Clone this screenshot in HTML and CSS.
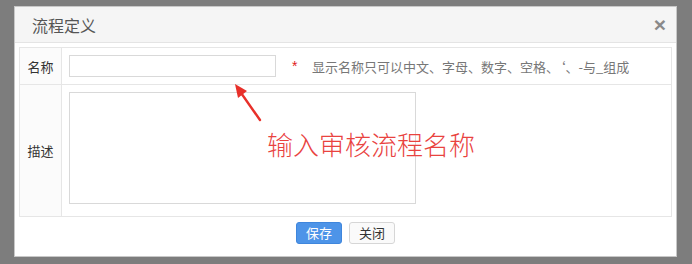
FILE: index.html
```html
<!DOCTYPE html>
<html lang="zh">
<head>
<meta charset="utf-8">
<link rel="stylesheet" href="styles.css">
</head>
<body>
<div class="dialog">
  <div class="dlg-head">
    <span class="dlg-title">流程定义</span>
    <span class="dlg-close">×</span>
  </div>
  <div class="dlg-body">
    <table class="form">
      <tr class="row-name">
        <td class="lbl">名称</td>
        <td class="val">
          <div class="name-line">
            <input class="txt" type="text">
            <span class="req">*</span>
            <span class="hint">显示名称只可以中文、字母、数字、空格、‘、-与_组成</span>
          </div>
        </td>
      </tr>
      <tr class="row-desc">
        <td class="lbl">描述</td>
        <td class="val">
          <div class="desc-line">
            <textarea class="area"></textarea>
            <span class="note">输入审核流程名称</span>
          </div>
        </td>
      </tr>
    </table>
  </div>
  <div class="dlg-foot">
    <button class="btn btn-primary">保存</button>
    <button class="btn">关闭</button>
  </div>
  <svg class="arrow" width="40" height="44" viewBox="0 0 40 44">
    <line x1="6" y1="7" x2="27" y2="37" stroke="#e8302a" stroke-width="2.4" stroke-linecap="round"/>
    <polygon points="2,1 14,8 5,15" fill="#e8302a"/>
  </svg>
</div>
</body>
</html>
```

FILE: styles.css
```css
html, body {
  margin: 0;
  padding: 0;
}
body {
  background: #7d7d7d;
  font-family: "Noto Sans CJK SC", "Liberation Sans", sans-serif;
  width: 692px;
  height: 264px;
  overflow: hidden;
}
.dialog {
  position: relative;
  margin: 6px 0 0 14px;
  width: 663px;
  height: 251px;
  background: #fff;
  border: 1px solid #c8c8c8;
  box-sizing: border-box;
}
.dlg-head {
  height: 36px;
  background: #f5f5f5;
  border-bottom: 1px solid #e4e4e4;
  display: flex;
  align-items: center;
  justify-content: space-between;
  padding: 0 10px 0 17px;
  box-sizing: border-box;
}
.dlg-title {
  font-size: 16px;
  color: #555;
  line-height: 1;
}
.dlg-close {
  font-family: "Liberation Sans", sans-serif;
  font-size: 21px;
  font-weight: bold;
  color: #8a8a8a;
  line-height: 1;
  margin-top: -1px;
}
.dlg-body {
  padding: 4px 4px 0 4px;
}
.form {
  border-collapse: collapse;
  width: 653px;
  border: 1px solid #e6e6e6;
}
.form td {
  border: 1px solid #e6e6e6;
  padding: 0;
}
.lbl {
  width: 41px;
  background: #fbfbfb;
  font-size: 13px;
  color: #333;
  text-align: center;
}
.row-name {
  height: 37px;
}
.row-desc {
  height: 132px;
}
.name-line {
  display: flex;
  align-items: center;
  padding-left: 7px;
}
.txt {
  width: 207px;
  height: 22px;
  box-sizing: border-box;
  border: 1px solid #d9d9d9;
  margin: 0;
  padding: 0 4px;
}
.req {
  color: #e02020;
  font-size: 14px;
  margin-left: 16px;
  width: 20px;
  font-family: "Liberation Sans", sans-serif;
}
.hint {
  font-size: 13px;
  color: #777;
  margin-left: 0;
}
.desc-line {
  display: flex;
  padding-left: 7px;
  height: 131px;
  align-items: flex-start;
}
.area {
  width: 347px;
  height: 112px;
  box-sizing: border-box;
  border: 1px solid #d9d9d9;
  margin: 7px 0 0 0;
  padding: 0;
  resize: none;
}
.note {
  font-size: 26px;
  color: #e9433f;
  margin-left: -149px;
  margin-top: 45px;
  line-height: 1.1;
  font-family: "Noto Sans CJK SC", sans-serif;
  font-weight: 300;
}
.dlg-foot {
  display: flex;
  justify-content: center;
  gap: 7px;
  padding-top: 5px;
  padding-left: 0;
}
.btn {
  height: 22px;
  width: 46px;
  font-family: "Noto Sans CJK SC", sans-serif;
  font-size: 13px;
  color: #333;
  background: #fafafa;
  border: 1px solid #d6d6d6;
  border-radius: 3px;
  padding: 0;
  line-height: 20px;
}
.btn-primary {
  background: #4d94e8;
  border-color: #3f86dc;
  color: #fff;
}
.arrow {
  position: absolute;
  left: 218px;
  top: 76px;
}
```
